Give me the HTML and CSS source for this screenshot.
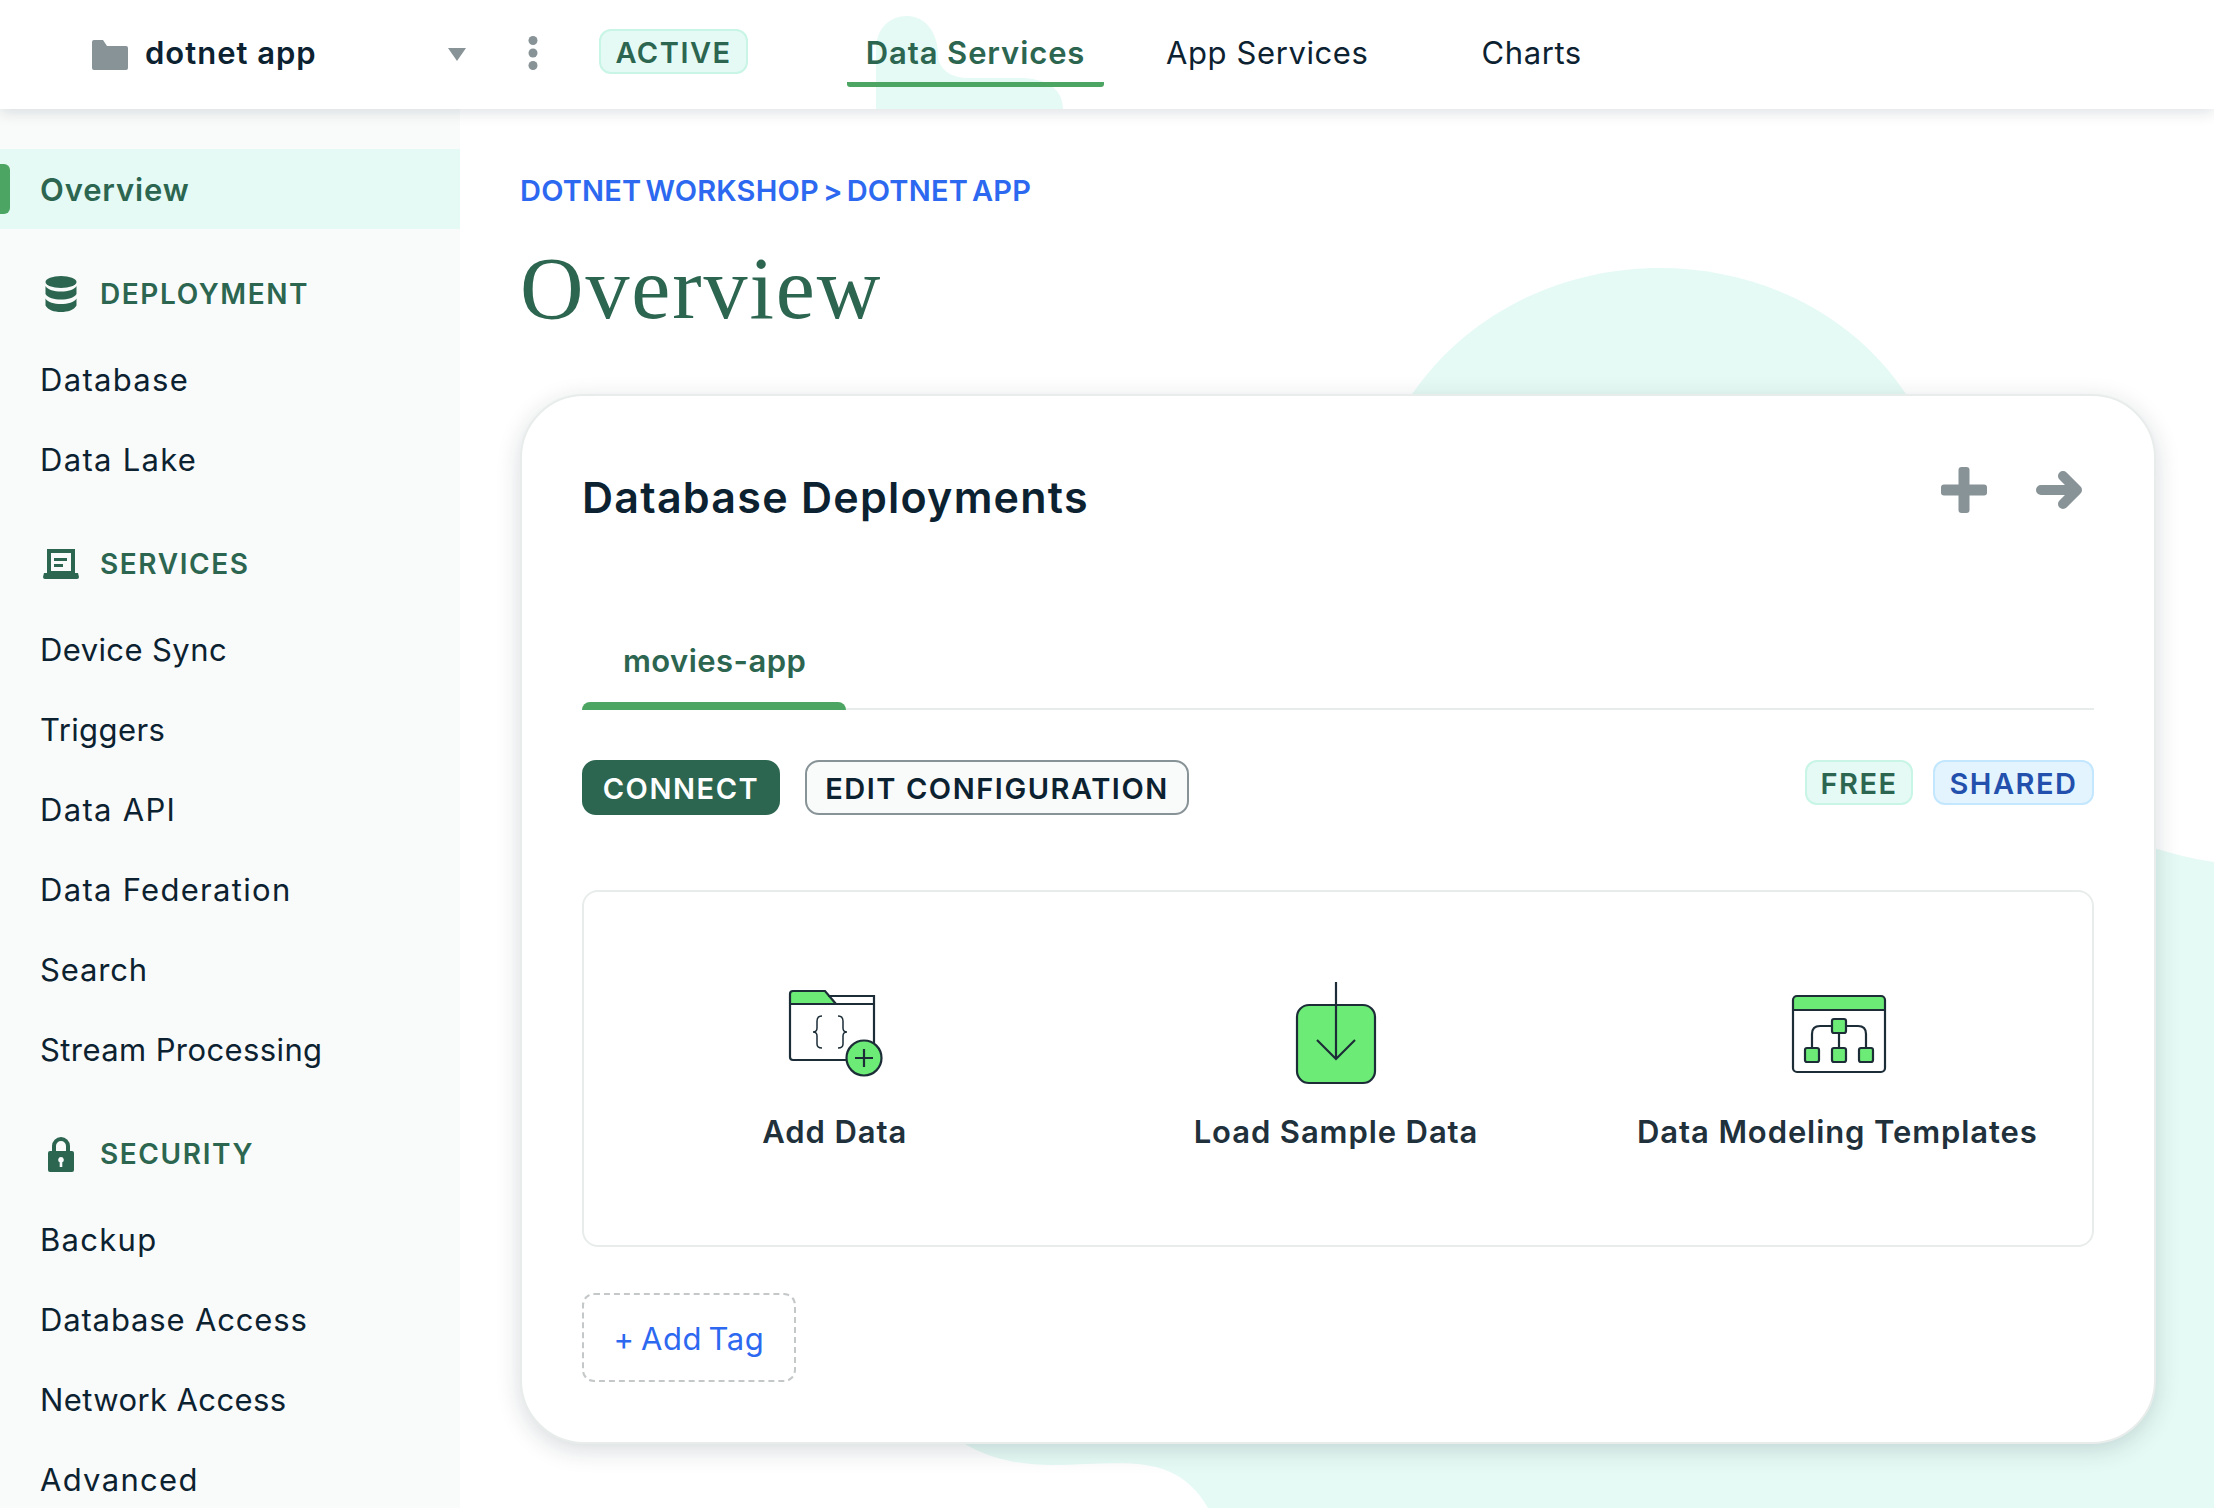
FILE: index.html
```html
<!DOCTYPE html>
<html lang="en">
<head>
<meta charset="utf-8">
<title>Overview</title>
<link rel="stylesheet" href="styles.css">
</head>
<body>
<svg class="blobs" width="2214" height="1508" viewBox="0 0 2214 1508" aria-hidden="true">
  <path d="M1412 394C1470 310 1565 268 1660 268C1755 268 1850 310 1906 394V420H1412Z"/>
  <path d="M2100 832L2154 848C2173 854 2194 859 2214 862V1508H1208C1175 1450 1120 1465 1052 1465C1005 1465 965 1452 935 1420V1380H2100Z"/>
</svg>
<header class="topbar">
  <svg class="hdr-blob" width="190" height="93" viewBox="876 16 190 93" aria-hidden="true"><path d="M876 109V50C876 28 890 16 907 16C925 16 938 32 938 55C938 68 950 78 968 78H1020C1045 78 1063 88 1063 109Z"/></svg>
  <div class="project">
    <svg class="folder" width="36" height="30" viewBox="0 0 36 30"><path d="M2 0H11L15 6H34A2 2 0 0 1 36 8V28A2 2 0 0 1 34 30H2A2 2 0 0 1 0 28V2A2 2 0 0 1 2 0Z"/></svg>
    <span class="project-name">dotnet app</span>
    <svg class="caret" width="20" height="13" viewBox="0 0 20 13"><path d="M1 0H19L10 13Z"/></svg>
    <svg class="dots" width="10" height="34" viewBox="0 0 10 34"><circle cx="5" cy="4.500" r="4.500"/><circle cx="5" cy="17" r="4.500"/><circle cx="5" cy="29.500" r="4.500"/></svg>
    <span class="badge badge-green badge-active">ACTIVE</span>
  </div>
  <nav class="topnav">
    <a class="topnav-item is-current">Data Services</a>
    <a class="topnav-item">App Services</a>
    <a class="topnav-item">Charts</a>
  </nav>
</header>
<div class="layout">
  <aside class="sidebar">
    <a class="nav-item is-active">Overview</a>
    <div class="nav-head">
      <svg width="32" height="36" viewBox="0 0 32 36"><ellipse cx="16" cy="6" rx="15.500" ry="6"/><path d="M.5 10C3 14 9 15.500 16 15.500S29 14 31.500 10V18C29 22 23 23.500 16 23.500S3 22 .5 18Z"/><path d="M.5 22.500C3 26.500 9 28 16 28S29 26.500 31.500 22.500V29.500C29 34 23 36 16 36S3 34 .5 29.500Z"/></svg>
      <span>DEPLOYMENT</span>
    </div>
    <a class="nav-item nav-wide">Database</a>
    <a class="nav-item nav-wide">Data Lake</a>
    <div class="nav-head">
      <svg width="36" height="30" viewBox="0 0 36 30"><path fill-rule="evenodd" d="M4 0H32V24H35L36 28Q36 30 34 30H2Q0 30 0 28L1 24H4ZM8 4V22H28V4ZM11 9H24V12H11ZM11 15H20V18H11Z"/></svg>
      <span>SERVICES</span>
    </div>
    <a class="nav-item nav-tight">Device Sync</a>
    <a class="nav-item nav-tight">Triggers</a>
    <a class="nav-item nav-wide">Data API</a>
    <a class="nav-item nav-wide">Data Federation</a>
    <a class="nav-item">Search</a>
    <a class="nav-item nav-tight">Stream Processing</a>
    <div class="nav-head">
      <svg width="36" height="36" viewBox="0 0 36 36"><path fill-rule="evenodd" d="M9 15V10A9 9 0 0 1 27 10V15H29A2 2 0 0 1 31 17V34A2 2 0 0 1 29 36H7A2 2 0 0 1 5 34V17A2 2 0 0 1 7 15ZM13 15H23V10A5 5 0 0 0 13 10ZM18 21A2.800 2.800 0 0 0 16.700 26.300V31H19.300V26.300A2.800 2.800 0 0 0 18 21Z"/></svg>
      <span>SECURITY</span>
    </div>
    <a class="nav-item nav-wide">Backup</a>
    <a class="nav-item">Database Access</a>
    <a class="nav-item nav-tight">Network Access</a>
    <a class="nav-item nav-wide">Advanced</a>
  </aside>
  <main class="main">
    <div class="breadcrumb">DOTNET WORKSHOP &gt; DOTNET APP</div>
    <h1 class="page-title">Overview</h1>
    <section class="card">
      <div class="card-head">
        <h2 class="card-title">Database Deployments</h2>
        <div class="card-actions">
          <svg width="46" height="46" viewBox="0 0 46 46"><rect x="17.500" y="0" width="11" height="46" rx="3"/><rect x="0" y="17.500" width="46" height="11" rx="3"/></svg>
          <svg width="46" height="38" viewBox="0 0 46 38"><path d="M5 19H40M27 5L41 19L27 33"/></svg>
        </div>
      </div>
      <div class="tabs">
        <div class="tab"><span>movies-app</span><i class="tab-bar"></i></div>
      </div>
      <div class="actions">
        <div class="buttons">
          <button class="btn btn-primary">CONNECT</button>
          <button class="btn btn-outline">EDIT CONFIGURATION</button>
        </div>
        <div class="badges">
          <span class="badge badge-green badge-free">FREE</span>
          <span class="badge badge-blue">SHARED</span>
        </div>
      </div>
      <div class="starter">
        <div class="tile">
          <svg class="tile-icon" width="110" height="110" viewBox="780 980 110 110">
            <path class="fill" d="M790 1004V994Q790 991 793 991H825L836 1004Z"/>
            <path class="line" d="M790 1004V994Q790 991 793 991H825L836 1004ZM828 996H874V1045M790 1004H874M790 1004V1057Q790 1060 793 1060H848"/>
            <path class="line thin" d="M822 1016Q817 1016 817 1021V1028Q817 1032 813 1032Q817 1032 817 1036V1044Q817 1048 822 1048M838 1016Q843 1016 843 1021V1028Q843 1032 847 1032Q843 1032 843 1036V1044Q843 1048 838 1048"/>
            <circle class="fill line" cx="864" cy="1058" r="17.500"/>
            <path class="line" d="M864 1049V1067M855 1058H873"/>
          </svg>
          <div class="tile-label">Add Data</div>
        </div>
        <div class="tile">
          <svg class="tile-icon" width="110" height="110" viewBox="1281 980 110 110">
            <rect class="fill line" x="1297" y="1005" width="78" height="78" rx="12"/>
            <path class="line" d="M1336 982V1059M1317 1040L1336 1059L1355 1040"/>
          </svg>
          <div class="tile-label">Load Sample Data</div>
        </div>
        <div class="tile">
          <svg class="tile-icon" width="110" height="110" viewBox="1782 980 110 110">
            <path class="fill" d="M1793 1010V999Q1793 996 1796 996H1882Q1885 996 1885 999V1010Z"/>
            <rect class="line" x="1793" y="996" width="92" height="76" rx="4"/>
            <path class="line" d="M1793 1010H1885M1812 1048V1034Q1812 1026 1820 1026H1858Q1866 1026 1866 1034V1048M1839 1033V1048"/>
            <rect class="fill line" x="1832" y="1019" width="14" height="14" rx="2"/>
            <rect class="fill line" x="1805" y="1048" width="14" height="14" rx="2"/>
            <rect class="fill line" x="1832" y="1048" width="14" height="14" rx="2"/>
            <rect class="fill line" x="1859" y="1048" width="14" height="14" rx="2"/>
          </svg>
          <div class="tile-label">Data Modeling Templates</div>
        </div>
      </div>
      <button class="add-tag">+ Add Tag</button>
    </section>
  </main>
</div>
</body>
</html>
```
FILE: styles.css
```css
* { box-sizing: border-box; }
html, body { margin: 0; height: 1508px; overflow: hidden; }
body {
  position: relative;
  width: 2214px;
  background: #fff;
  font-family: Inter, "Liberation Sans", sans-serif;
  color: #0c2231;
}
.blobs { position: absolute; left: 0; top: 0; fill: #e6faf5; }
.topbar {
  position: relative;
  z-index: 2;
  height: 109px;
  display: flex;
  align-items: center;
  background: #fff;
  box-shadow: 0 3px 14px rgba(0, 30, 43, .14);
}
.hdr-blob { position: absolute; left: 876px; top: 16px; fill: #e6faf5; }
.project { display: flex; align-items: center; padding-left: 92px; position: relative; }
.folder { fill: #889397; }
.project-name { margin: -5px 0 0 17px; width: 302px; font-size: 31px; font-weight: 600; letter-spacing: 1px; }
.caret { fill: #889397; }
.dots { fill: #889397; margin-left: 61px; margin-top: -4px; }
.badge {
  display: flex;
  align-items: center;
  justify-content: center;
  height: 45px;
  padding-top: 2px;
  border-radius: 12px;
  border: 2px solid;
  font-size: 29px;
  font-weight: 600;
  letter-spacing: 1.500px;
}
.badge-green { background: #e6faf5; border-color: #c8f5e5; color: #2c6650; }
.badge-blue { background: #e3f4fe; border-color: #c3e7fe; color: #2350ad; width: 161px; }
.badge-active { width: 149px; margin-left: 61px; margin-top: -6px; }
.badge-free { width: 108px; }
.topnav { position: absolute; left: 847px; top: 0; height: 109px; display: flex; }
.topnav-item {
  display: flex;
  align-items: center;
  height: 87px;
  padding-top: 17px;
  font-size: 31px;
  letter-spacing: .6px;
  margin-right: 113px;
}
.topnav-item.is-current {
  width: 257px;
  justify-content: center;
  margin-right: 62px;
  padding-top: 22px;
  border-bottom: 5px solid #4ca562;
  border-radius: 3px;
  color: #2c6650;
  font-weight: 600;
  letter-spacing: .9px;
}
.layout { position: relative; display: flex; height: 1399px; }
.sidebar { width: 460px; flex: none; padding-top: 40px; background: #f9fbfa; }
.nav-item {
  position: relative;
  display: flex;
  align-items: center;
  height: 80px;
  padding-left: 40px;
  font-size: 31px;
  letter-spacing: .85px;
}
.nav-wide { letter-spacing: 1.300px; }
.nav-tight { letter-spacing: .4px; }
.nav-item.is-active { background: #e6faf5; color: #2c6650; font-weight: 600; }
.nav-item.is-active::before {
  content: "";
  position: absolute;
  left: 0;
  top: 15px;
  width: 10px;
  height: 50px;
  border-radius: 0 6px 6px 0;
  background: #4ca562;
}
.nav-head {
  display: flex;
  align-items: center;
  height: 56px;
  margin: 37px 0 17px;
  padding-left: 42px;
  color: #2c6650;
  fill: #2c6650;
  font-size: 28px;
  font-weight: 600;
  letter-spacing: 1.600px;
}
.nav-head svg { width: 38px; flex: none; margin-right: 20px; }
.main { flex: 1; position: relative; padding: 60px 58px 0 60px; }
.breadcrumb { height: 42px; padding-top: 1px; line-height: 42px; color: #2d69f0; font-size: 29px; font-weight: 600; letter-spacing: .2px; word-spacing: -3.500px; }
.page-title {
  margin: 32px 0 0;
  height: 91px;
  line-height: 91px;
  color: #2c6650;
  font-family: "Liberation Serif", serif;
  font-size: 88px;
  font-weight: 400;
  letter-spacing: 1.900px;
}
.card {
  margin-top: 60px;
  height: 1050px;
  padding: 60px;
  background: #fff;
  border: 2px solid #e8edeb;
  border-radius: 64px;
  box-shadow: 0 6px 24px rgba(0, 30, 43, .16);
}
.card-head { height: 82px; display: flex; justify-content: space-between; }
.card-title { margin: 0; font-size: 43px; font-weight: 600; line-height: 82px; letter-spacing: 1.250px; }
.card-actions { display: flex; align-items: center; gap: 49px; height: 46px; margin: 11px 12px 0 0; }
.card-actions svg { fill: #889397; }
.card-actions path { fill: none; stroke: #889397; stroke-width: 10; stroke-linecap: round; stroke-linejoin: round; }
.tabs { display: flex; align-items: flex-end; height: 172px; border-bottom: 2px solid #e8edeb; }
.tab {
  display: flex;
  flex-direction: column;
  width: 264px;
  margin-bottom: -2px;
  color: #2c6650;
  font-size: 31px;
  font-weight: 600;
  letter-spacing: .45px;
}
.tab span { height: 40px; line-height: 40px; padding-left: 41px; margin-bottom: 21px; }
.tab-bar { height: 8px; border-radius: 8px 8px 0 0; background: #4ca562; }
.actions { display: flex; justify-content: space-between; margin-top: 50px; height: 55px; }
.buttons { display: flex; gap: 25px; }
.btn {
  height: 55px;
  border-radius: 14px;
  font-family: inherit;
  font-size: 29px;
  font-weight: 600;
  letter-spacing: 1.550px;
  padding: 2px 0 0;
}
.btn-primary { width: 198px; background: #2c6650; border: 0; color: #fff; }
.btn-outline { width: 384px; background: #f9fbfa; border: 2px solid #889397; color: #0c2231; }
.badges { display: flex; gap: 20px; }
.starter {
  display: grid;
  grid-template-columns: repeat(3, 1fr);
  height: 357px;
  margin-top: 75px;
  padding: 88px 4px 0 0;
  border: 2px solid #e8edeb;
  border-radius: 16px;
}
.tile { display: flex; flex-direction: column; align-items: center; }
.tile-icon { display: block; }
.tile-icon .fill { fill: #6ceb76; }
.tile-icon .line { fill: none; stroke: #1c2d38; stroke-width: 2.200; }
.tile-icon .fill.line { fill: #6ceb76; }
.tile-icon .thin { stroke-width: 1.500; }
.tile-label { margin-top: 22px; height: 40px; line-height: 40px; font-size: 31px; font-weight: 600; color: #21313c; letter-spacing: .9px; }
.add-tag {
  display: block;
  width: 214px;
  height: 89px;
  margin-top: 46px;
  padding: 2px 0 0;
  background: #fff;
  border: 2px dashed #c5c8c9;
  border-radius: 12px;
  color: #2d69f0;
  font-family: inherit;
  font-size: 31px;
  letter-spacing: .6px;
  word-spacing: -3px;
}
```
